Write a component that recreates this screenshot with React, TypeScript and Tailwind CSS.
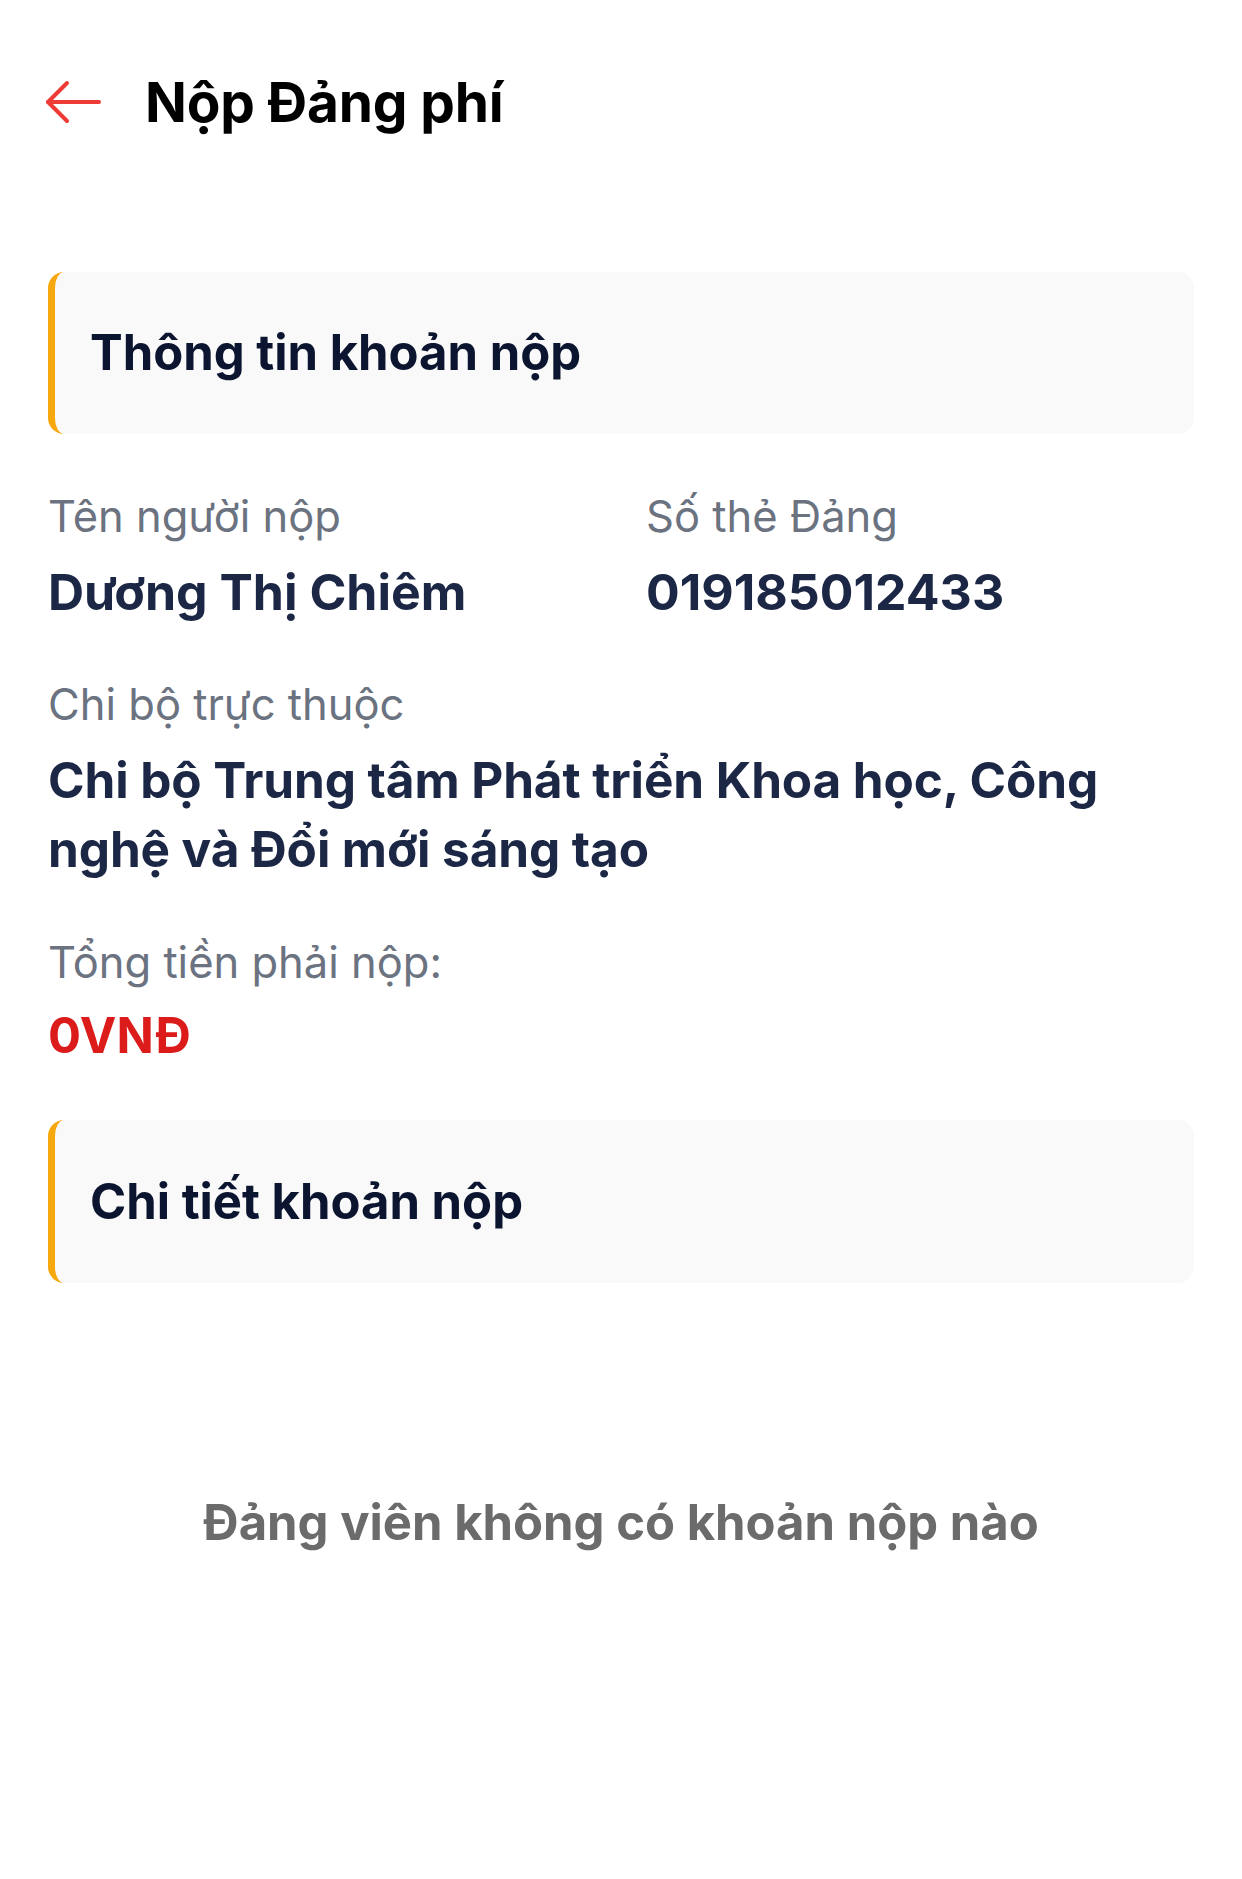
import React from "react";

export default function App() {
  return (
    <div className="w-[1242px] min-h-[1879px] bg-white" style={{ fontFamily: "Inter, 'Noto Sans', sans-serif" }}>
      <div className="h-[204px] flex items-center pl-[44px]">
        <svg width="58" height="44" viewBox="0 0 58 44" fill="none" stroke="#ef3b36" strokeWidth="4" strokeLinecap="round" strokeLinejoin="round">
          <path d="M55 22H4" />
          <path d="M23 3L4 22l19 19" />
        </svg>
        <h1 className="ml-[43px] text-[55px] font-bold text-black tracking-[-0.2px] leading-[68px]">Nộp Đảng phí</h1>
      </div>

      <div className="px-[48px]">
        <div className="mt-[68px] h-[162px] rounded-[16px] bg-[#f9f9fa] border-l-[7px] border-[#f8a80f] flex items-center pl-[35px]">
          <span className="text-[49px] font-bold text-[#0b1530]">Thông tin khoản nộp</span>
        </div>

        <div className="flex mt-[54px]">
          <div className="w-[598px]">
            <div className="text-[43.5px] text-[#6b7280] leading-[56px]">Tên người nộp</div>
            <div className="text-[50px] font-bold text-[#1b2745] leading-[68px] mt-[14px]">Dương Thị Chiêm</div>
          </div>
          <div>
            <div className="text-[43.5px] text-[#6b7280] leading-[56px]">Số thẻ Đảng</div>
            <div className="text-[50px] font-bold text-[#1b2745] leading-[68px] mt-[14px]">019185012433</div>
          </div>
        </div>

        <div className="mt-[50px] text-[43.5px] text-[#6b7280] leading-[56px]">Chi bộ trực thuộc</div>
        <div className="mt-[14px] text-[49.5px] font-bold text-[#1b2745] leading-[69px] tracking-[-0.1px]">
          Chi bộ Trung tâm Phát triển Khoa học, Công nghệ và Đổi mới sáng tạo
        </div>

        <div className="mt-[50px] text-[43.5px] text-[#6b7280] leading-[56px]">Tổng tiền phải nộp:</div>
        <div className="mt-[12px] text-[49px] font-bold text-[#dc1b1b] leading-[68px]">0VNĐ</div>

        <div className="mt-[50px] h-[163px] rounded-[16px] bg-[#f9f9fa] border-l-[7px] border-[#f8a80f] flex items-center pl-[35px]">
          <span className="text-[49px] font-bold text-[#0b1530]">Chi tiết khoản nộp</span>
        </div>

        <div className="mt-[206px] text-center text-[49px] font-bold text-[#6b6b6b] leading-[68px]">
          Đảng viên không có khoản nộp nào
        </div>
      </div>
    </div>
  );
}
